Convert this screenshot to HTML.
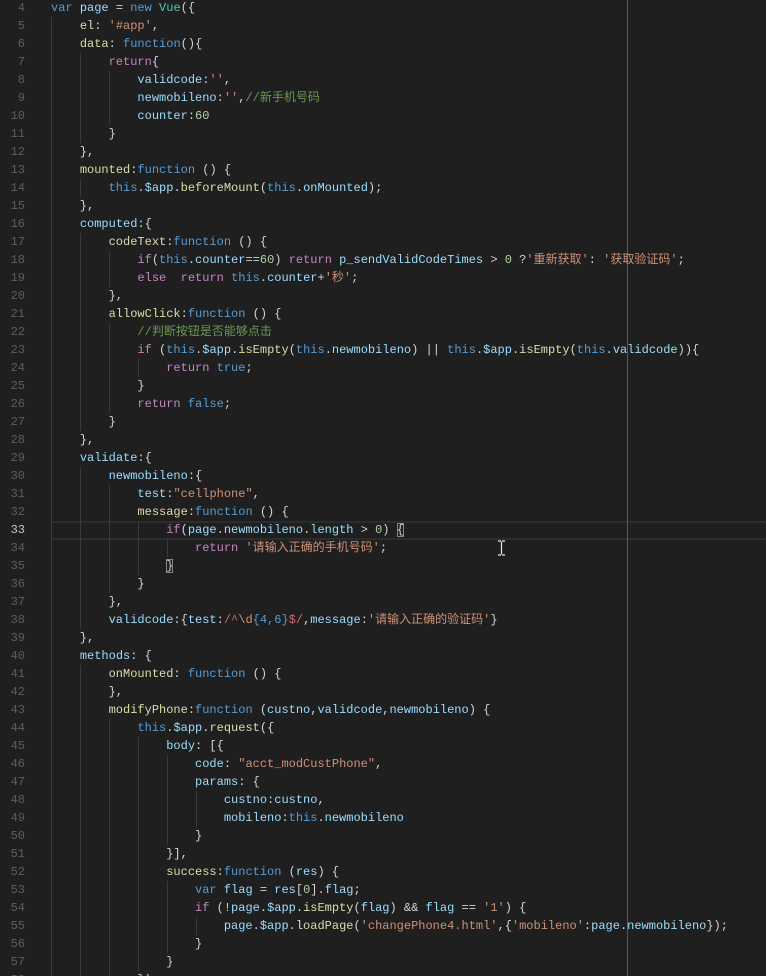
<!DOCTYPE html>
<html><head><meta charset="utf-8"><style>
html,body{margin:0;padding:0;background:#1f1f1f;width:766px;height:976px;overflow:hidden}
.ed{position:relative;width:766px;height:976px;font-family:"Liberation Mono","Noto Sans CJK SC",monospace;font-size:12px;color:#d4d4d4}
.l{position:absolute;left:0;height:18px;line-height:18px;width:766px;white-space:pre}
.n{position:absolute;left:0;width:25px;text-align:right;color:#5e5e5e}
.n.a{color:#c6c6c6}
.c{position:absolute;left:51px}
.g{position:absolute;left:51px;top:0;height:18px;background:repeating-linear-gradient(to right,#3a3a3a 0 1px,transparent 1px 29px)}
.k{color:#569cd6}.r{color:#c586c0}.p{color:#9cdcfe}.f{color:#dcdcaa}.s{color:#ce9178}.m{color:#b5cea8}.cm{color:#6a9955}.t{color:#4ec9b0}.re{color:#d16969}
.ruler{position:absolute;left:627px;top:0;width:1px;height:976px;background:#5a5a5a}
.hl{position:absolute;left:52px;top:521px;width:714px;height:15px;border-top:2px solid #2c2c2c;border-bottom:2px solid #2c2c2c}
.bm{outline:1px solid #888;outline-offset:-1px}
.cur{position:absolute;left:497px;top:540px;width:9px;height:16px}
</style></head><body><div class="ed">
<div class="hl"></div>
<div class="ruler"></div>
<div class="l" style="top:-1px"><span class="n">4</span><span class="c"><span class="k">var</span> <span class="p">page</span> = <span class="k">new</span> <span class="t">Vue</span>({</span></div>
<div class="l" style="top:17px"><span class="n">5</span><span class="g" style="width:29px"></span><span class="c">    <span class="f">el</span>: <span class="s">'#app'</span>,</span></div>
<div class="l" style="top:35px"><span class="n">6</span><span class="g" style="width:29px"></span><span class="c">    <span class="f">data</span>: <span class="k">function</span>(){</span></div>
<div class="l" style="top:53px"><span class="n">7</span><span class="g" style="width:58px"></span><span class="c">        <span class="r">return</span>{</span></div>
<div class="l" style="top:71px"><span class="n">8</span><span class="g" style="width:87px"></span><span class="c">            <span class="p">validcode</span>:<span class="s">''</span>,</span></div>
<div class="l" style="top:89px"><span class="n">9</span><span class="g" style="width:87px"></span><span class="c">            <span class="p">newmobileno</span>:<span class="s">''</span>,<span class="cm">//新手机号码</span></span></div>
<div class="l" style="top:107px"><span class="n">10</span><span class="g" style="width:87px"></span><span class="c">            <span class="p">counter</span>:<span class="m">60</span></span></div>
<div class="l" style="top:125px"><span class="n">11</span><span class="g" style="width:58px"></span><span class="c">        }</span></div>
<div class="l" style="top:143px"><span class="n">12</span><span class="g" style="width:29px"></span><span class="c">    },</span></div>
<div class="l" style="top:161px"><span class="n">13</span><span class="g" style="width:29px"></span><span class="c">    <span class="f">mounted</span>:<span class="k">function</span> () {</span></div>
<div class="l" style="top:179px"><span class="n">14</span><span class="g" style="width:58px"></span><span class="c">        <span class="k">this</span>.<span class="p">$app</span>.<span class="f">beforeMount</span>(<span class="k">this</span>.<span class="p">onMounted</span>);</span></div>
<div class="l" style="top:197px"><span class="n">15</span><span class="g" style="width:29px"></span><span class="c">    },</span></div>
<div class="l" style="top:215px"><span class="n">16</span><span class="g" style="width:29px"></span><span class="c">    <span class="p">computed</span>:{</span></div>
<div class="l" style="top:233px"><span class="n">17</span><span class="g" style="width:58px"></span><span class="c">        <span class="f">codeText</span>:<span class="k">function</span> () {</span></div>
<div class="l" style="top:251px"><span class="n">18</span><span class="g" style="width:87px"></span><span class="c">            <span class="r">if</span>(<span class="k">this</span>.<span class="p">counter</span>==<span class="m">60</span>) <span class="r">return</span> <span class="p">p_sendValidCodeTimes</span> &gt; <span class="m">0</span> ?<span class="s">'重新获取'</span>: <span class="s">'获取验证码'</span>;</span></div>
<div class="l" style="top:269px"><span class="n">19</span><span class="g" style="width:87px"></span><span class="c">            <span class="r">else</span>  <span class="r">return</span> <span class="k">this</span>.<span class="p">counter</span>+<span class="s">'秒'</span>;</span></div>
<div class="l" style="top:287px"><span class="n">20</span><span class="g" style="width:58px"></span><span class="c">        },</span></div>
<div class="l" style="top:305px"><span class="n">21</span><span class="g" style="width:58px"></span><span class="c">        <span class="f">allowClick</span>:<span class="k">function</span> () {</span></div>
<div class="l" style="top:323px"><span class="n">22</span><span class="g" style="width:87px"></span><span class="c">            <span class="cm">//判断按钮是否能够点击</span></span></div>
<div class="l" style="top:341px"><span class="n">23</span><span class="g" style="width:87px"></span><span class="c">            <span class="r">if</span> (<span class="k">this</span>.<span class="p">$app</span>.<span class="f">isEmpty</span>(<span class="k">this</span>.<span class="p">newmobileno</span>) || <span class="k">this</span>.<span class="p">$app</span>.<span class="f">isEmpty</span>(<span class="k">this</span>.<span class="p">validcode</span>)){</span></div>
<div class="l" style="top:359px"><span class="n">24</span><span class="g" style="width:116px"></span><span class="c">                <span class="r">return</span> <span class="k">true</span>;</span></div>
<div class="l" style="top:377px"><span class="n">25</span><span class="g" style="width:87px"></span><span class="c">            }</span></div>
<div class="l" style="top:395px"><span class="n">26</span><span class="g" style="width:87px"></span><span class="c">            <span class="r">return</span> <span class="k">false</span>;</span></div>
<div class="l" style="top:413px"><span class="n">27</span><span class="g" style="width:58px"></span><span class="c">        }</span></div>
<div class="l" style="top:431px"><span class="n">28</span><span class="g" style="width:29px"></span><span class="c">    },</span></div>
<div class="l" style="top:449px"><span class="n">29</span><span class="g" style="width:29px"></span><span class="c">    <span class="p">validate</span>:{</span></div>
<div class="l" style="top:467px"><span class="n">30</span><span class="g" style="width:58px"></span><span class="c">        <span class="p">newmobileno</span>:{</span></div>
<div class="l" style="top:485px"><span class="n">31</span><span class="g" style="width:87px"></span><span class="c">            <span class="p">test</span>:<span class="s">"cellphone"</span>,</span></div>
<div class="l" style="top:503px"><span class="n">32</span><span class="g" style="width:87px"></span><span class="c">            <span class="f">message</span>:<span class="k">function</span> () {</span></div>
<div class="l" style="top:521px"><span class="n a">33</span><span class="g" style="width:116px"></span><span class="c">                <span class="r">if</span>(<span class="p">page</span>.<span class="p">newmobileno</span>.<span class="p">length</span> &gt; <span class="m">0</span>) <span class="bm">{</span></span></div>
<div class="l" style="top:539px"><span class="n">34</span><span class="g" style="width:145px"></span><span class="c">                    <span class="r">return</span> <span class="s">'请输入正确的手机号码'</span>;</span></div>
<div class="l" style="top:557px"><span class="n">35</span><span class="g" style="width:116px"></span><span class="c">                <span class="bm">}</span></span></div>
<div class="l" style="top:575px"><span class="n">36</span><span class="g" style="width:87px"></span><span class="c">            }</span></div>
<div class="l" style="top:593px"><span class="n">37</span><span class="g" style="width:58px"></span><span class="c">        },</span></div>
<div class="l" style="top:611px"><span class="n">38</span><span class="g" style="width:58px"></span><span class="c">        <span class="p">validcode</span>:{<span class="p">test</span>:<span class="re">/^</span><span class="s">\d</span><span class="k">{4,6}</span><span class="re">$/</span>,<span class="p">message</span>:<span class="s">'请输入正确的验证码'</span>}</span></div>
<div class="l" style="top:629px"><span class="n">39</span><span class="g" style="width:29px"></span><span class="c">    },</span></div>
<div class="l" style="top:647px"><span class="n">40</span><span class="g" style="width:29px"></span><span class="c">    <span class="p">methods</span>: {</span></div>
<div class="l" style="top:665px"><span class="n">41</span><span class="g" style="width:58px"></span><span class="c">        <span class="f">onMounted</span>: <span class="k">function</span> () {</span></div>
<div class="l" style="top:683px"><span class="n">42</span><span class="g" style="width:58px"></span><span class="c">        },</span></div>
<div class="l" style="top:701px"><span class="n">43</span><span class="g" style="width:58px"></span><span class="c">        <span class="f">modifyPhone</span>:<span class="k">function</span> (<span class="p">custno</span>,<span class="p">validcode</span>,<span class="p">newmobileno</span>) {</span></div>
<div class="l" style="top:719px"><span class="n">44</span><span class="g" style="width:87px"></span><span class="c">            <span class="k">this</span>.<span class="p">$app</span>.<span class="f">request</span>({</span></div>
<div class="l" style="top:737px"><span class="n">45</span><span class="g" style="width:116px"></span><span class="c">                <span class="p">body</span>: [{</span></div>
<div class="l" style="top:755px"><span class="n">46</span><span class="g" style="width:145px"></span><span class="c">                    <span class="p">code</span>: <span class="s">"acct_modCustPhone"</span>,</span></div>
<div class="l" style="top:773px"><span class="n">47</span><span class="g" style="width:145px"></span><span class="c">                    <span class="p">params</span>: {</span></div>
<div class="l" style="top:791px"><span class="n">48</span><span class="g" style="width:174px"></span><span class="c">                        <span class="p">custno</span>:<span class="p">custno</span>,</span></div>
<div class="l" style="top:809px"><span class="n">49</span><span class="g" style="width:174px"></span><span class="c">                        <span class="p">mobileno</span>:<span class="k">this</span>.<span class="p">newmobileno</span></span></div>
<div class="l" style="top:827px"><span class="n">50</span><span class="g" style="width:145px"></span><span class="c">                    }</span></div>
<div class="l" style="top:845px"><span class="n">51</span><span class="g" style="width:116px"></span><span class="c">                }],</span></div>
<div class="l" style="top:863px"><span class="n">52</span><span class="g" style="width:116px"></span><span class="c">                <span class="f">success</span>:<span class="k">function</span> (<span class="p">res</span>) {</span></div>
<div class="l" style="top:881px"><span class="n">53</span><span class="g" style="width:145px"></span><span class="c">                    <span class="k">var</span> <span class="p">flag</span> = <span class="p">res</span>[<span class="m">0</span>].<span class="p">flag</span>;</span></div>
<div class="l" style="top:899px"><span class="n">54</span><span class="g" style="width:145px"></span><span class="c">                    <span class="r">if</span> (!<span class="p">page</span>.<span class="p">$app</span>.<span class="f">isEmpty</span>(<span class="p">flag</span>) &amp;&amp; <span class="p">flag</span> == <span class="s">'1'</span>) {</span></div>
<div class="l" style="top:917px"><span class="n">55</span><span class="g" style="width:174px"></span><span class="c">                        <span class="p">page</span>.<span class="p">$app</span>.<span class="f">loadPage</span>(<span class="s">'changePhone4.html'</span>,{<span class="s">'mobileno'</span>:<span class="p">page</span>.<span class="p">newmobileno</span>});</span></div>
<div class="l" style="top:935px"><span class="n">56</span><span class="g" style="width:145px"></span><span class="c">                    }</span></div>
<div class="l" style="top:953px"><span class="n">57</span><span class="g" style="width:116px"></span><span class="c">                }</span></div>
<div class="l" style="top:971px"><span class="n">58</span><span class="g" style="width:87px"></span><span class="c">            }),</span></div>
<svg class="cur" viewBox="0 0 9 16"><path d="M1 1h3M5 1h3M4.5 1.5v13M1 15h3M5 15h3" stroke="#e8e8e8" stroke-width="1.2" fill="none"/></svg>
</div></body></html>
